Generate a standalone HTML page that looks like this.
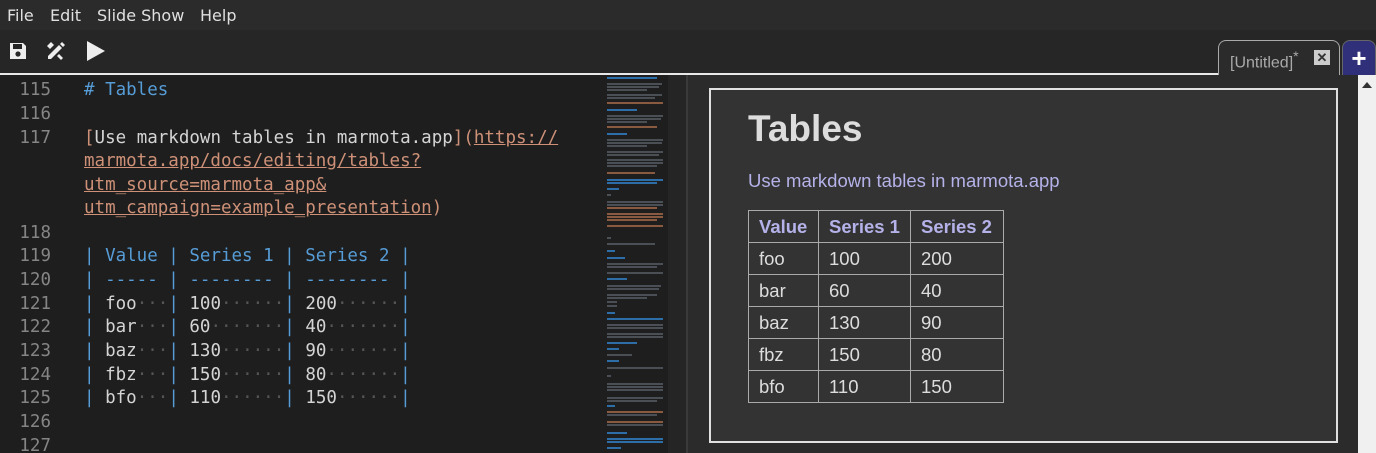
<!DOCTYPE html>
<html><head><style>
*{margin:0;padding:0;box-sizing:border-box}
html{overflow:hidden;width:1376px;height:453px}
body{width:1376px;height:453px;overflow:hidden;background:#2b2b2b;font-family:"DejaVu Sans","Liberation Sans",sans-serif;position:relative}
.menu{position:absolute;left:0;top:0;width:1376px;height:30px;background:#2b2b2b;color:#e0e0e0;font-size:16px}
.menu span{position:absolute;top:6px}
.tool{position:absolute;left:0;top:30px;width:1376px;height:44px;background:#262626}
.sep{position:absolute;left:0;top:73px;width:1218px;height:2px;background:#e8e8e8}
.editor{position:absolute;left:0;top:78px;width:605px;height:375px;overflow:hidden;background:#1e1e1e;font-family:"DejaVu Sans Mono",monospace;font-size:17.5px;color:#d4d4d4}
.edbg{position:absolute;left:0;top:75px;width:605px;height:378px;background:#1e1e1e}
.ln{position:absolute;left:0;width:51px;text-align:right;color:#858585}
.tx{position:absolute;left:84px;white-space:pre}
.b{color:#569cd6}.o{color:#ce9178}.u{color:#ce9178;text-decoration:underline}
.d{color:#555}
.mini{position:absolute;left:605px;top:75px;width:63px;height:378px;overflow:hidden;background:#1e1e1e}
.mini i{position:absolute;left:2px;height:2px;background:#4a4f55}
.mini i.b2{background:#2e6ea8}
.mini i.o2{background:#8a5a40}
.sb{position:absolute;left:668px;top:75px;width:18px;height:378px;background:#252525}
.div{position:absolute;left:686px;top:75px;width:2px;height:378px;background:#3a3a3a}
.prev{position:absolute;left:688px;top:75px;width:670px;height:378px;background:#2b2b2b}
.frame{position:absolute;left:709px;top:88px;width:629px;height:355px;border:2px solid #e0e0e0;background:#333}
.rsb{position:absolute;left:1358px;top:75px;width:18px;height:378px;background:#f0f0f0}
.tab{position:absolute;left:1218px;top:40px;width:122px;height:36px;border:1px solid #aaa;border-bottom:none;border-radius:8px 8px 0 0;background:#2b2b2b;color:#aaa;font-family:"Liberation Sans",sans-serif;font-size:16px}
.plus{position:absolute;left:1342px;top:40px;width:34px;height:36px;background:#2f2f7a;border-radius:8px 8px 0 0;border:1px solid #666;color:#fff;font-size:26px;text-align:center;line-height:34px;font-family:"Liberation Sans",sans-serif;font-weight:bold}
table{position:absolute;left:748px;top:210px;border-collapse:collapse;table-layout:fixed;width:255px;font-family:"Liberation Sans",sans-serif;font-size:18.5px;color:#ddd}
td,th{border:1px solid #aaa;height:32px;padding:0 0 0 10px;text-align:left;white-space:nowrap}
th{color:#b4b2e8}
</style></head><body>
<div class="menu"><span style="left:7px">File</span><span style="left:50px">Edit</span><span style="left:97px">Slide Show</span><span style="left:200px">Help</span></div>
<div class="tool">
<svg style="position:absolute;left:8px;top:11px" width="20" height="20" viewBox="0 0 20 20"><path d="M2 2h13l3 3v13H2z" fill="#eee"/><rect x="5" y="3" width="9" height="5" fill="#262626"/><circle cx="10" cy="13" r="2.6" fill="#262626"/></svg>
<svg style="position:absolute;left:45px;top:10px" width="22" height="22" viewBox="0 0 22 22"><g fill="#eee"><path d="M3 16l11-11 3 3-11 11H3z"/><path d="M15 4l2-2 3 3-2 2z"/><path d="M2 6l4-4 3 3-4 4z"/><path d="M14 14l4 4-2 2-4-4z"/></g></svg>
<svg style="position:absolute;left:86px;top:10px" width="20" height="22" viewBox="0 0 20 22"><path d="M1 1l18 10L1 21z" fill="#eee"/></svg>
</div>
<div class="tab"><span style="position:absolute;left:11px;top:7px">[Untitled]<sup style="font-size:14px">*</sup></span><span style="position:absolute;left:95px;top:9px;width:16px;height:15px;background:#ccc;color:#333;font-size:13px;font-weight:bold;text-align:center;line-height:15px">✕</span></div>
<div class="plus">+</div>
<div class="sep"></div>
<div class="edbg"></div>
<div class="editor">
<div class="ln" style="top:2px">115</div><div class="tx b" style="top:2px"># Tables</div>
<div class="ln" style="top:26px">116</div>
<div class="ln" style="top:50px">117</div><div class="tx" style="top:50px"><span class="o">[</span>Use markdown tables in marmota.app<span class="o">](</span><span class="u">https://</span></div>
<div class="tx" style="top:73px"><span class="u">marmota.app/docs/editing/tables?</span></div>
<div class="tx" style="top:97px"><span class="u">utm_source=marmota_app&amp;</span></div>
<div class="tx" style="top:120px"><span class="u">utm_campaign=example_presentation</span><span class="o">)</span></div>
<div class="ln" style="top:145px">118</div>
<div class="ln" style="top:168px">119</div><div class="tx b" style="top:168px">| Value | Series 1 | Series 2 |</div>
<div class="ln" style="top:192px">120</div><div class="tx b" style="top:192px">| ----- | -------- | -------- |</div>
<div class="ln" style="top:216px">121</div><div class="tx" style="top:216px"><span class="b">|</span> foo<span class="d">···</span><span class="b">|</span> 100<span class="d">······</span><span class="b">|</span> 200<span class="d">······</span><span class="b">|</span></div>
<div class="ln" style="top:239px">122</div><div class="tx" style="top:239px"><span class="b">|</span> bar<span class="d">···</span><span class="b">|</span> 60<span class="d">·······</span><span class="b">|</span> 40<span class="d">·······</span><span class="b">|</span></div>
<div class="ln" style="top:263px">123</div><div class="tx" style="top:263px"><span class="b">|</span> baz<span class="d">···</span><span class="b">|</span> 130<span class="d">······</span><span class="b">|</span> 90<span class="d">·······</span><span class="b">|</span></div>
<div class="ln" style="top:287px">124</div><div class="tx" style="top:287px"><span class="b">|</span> fbz<span class="d">···</span><span class="b">|</span> 150<span class="d">······</span><span class="b">|</span> 80<span class="d">·······</span><span class="b">|</span></div>
<div class="ln" style="top:310px">125</div><div class="tx" style="top:310px"><span class="b">|</span> bfo<span class="d">···</span><span class="b">|</span> 110<span class="d">······</span><span class="b">|</span> 150<span class="d">······</span><span class="b">|</span></div>
<div class="ln" style="top:334px">126</div>
<div class="ln" style="top:358px">127</div>
</div>
<div class="mini">
<i class="b2" style="top:2px;width:50px"></i><i style="top:8px;width:55px"></i><i style="top:11px;width:52px"></i><i style="top:14px;width:40px"></i><i style="top:19px;width:55px"></i><i style="top:22px;width:48px"></i><i class="o2" style="top:27px;width:56px"></i><i class="b2" style="top:34px;width:30px"></i><i style="top:40px;width:56px"></i><i style="top:43px;width:54px"></i><i style="top:46px;width:40px"></i><i class="o2" style="top:51px;width:50px"></i><i class="b2" style="top:58px;width:20px"></i><i style="top:64px;width:56px"></i><i style="top:67px;width:55px"></i><i style="top:70px;width:40px"></i><i style="top:76px;width:56px"></i><i style="top:79px;width:52px"></i><i style="top:84px;width:56px"></i><i style="top:87px;width:56px"></i><i style="top:90px;width:50px"></i><i class="o2" style="top:97px;width:48px"></i><i class="b2" style="top:104px;width:56px"></i><i class="b2" style="top:107px;width:50px"></i><i class="b2" style="top:113px;width:12px"></i><i style="top:119px;width:4px"></i><i style="top:126px;width:56px"></i><i style="top:129px;width:56px"></i><i class="o2" style="top:132px;width:50px"></i><i class="o2" style="top:138px;width:56px"></i><i class="o2" style="top:141px;width:56px"></i><i class="o2" style="top:144px;width:50px"></i><i class="o2" style="top:150px;width:56px"></i><i style="top:162px;width:4px"></i><i style="top:168px;width:48px"></i><i class="b2" style="top:175px;width:8px"></i><i class="b2" style="top:182px;width:18px"></i><i style="top:188px;width:56px"></i><i style="top:191px;width:50px"></i><i style="top:197px;width:56px"></i><i class="b2" style="top:203px;width:20px"></i><i style="top:210px;width:54px"></i><i style="top:213px;width:52px"></i><i style="top:219px;width:50px"></i><i style="top:222px;width:40px"></i><i style="top:226px;width:10px"></i><i style="top:230px;width:10px"></i><i class="b2" style="top:237px;width:8px"></i><i class="b2" style="top:243px;width:56px"></i><i style="top:249px;width:56px"></i><i style="top:252px;width:56px"></i><i style="top:258px;width:56px"></i><i style="top:261px;width:56px"></i><i class="b2" style="top:267px;width:30px"></i><i class="b2" style="top:273px;width:12px"></i><i style="top:279px;width:25px"></i><i class="b2" style="top:285px;width:12px"></i><i style="top:292px;width:56px"></i><i style="top:300px;width:4px"></i><i style="top:308px;width:56px"></i><i style="top:311px;width:56px"></i><i style="top:314px;width:56px"></i><i style="top:322px;width:56px"></i><i style="top:325px;width:50px"></i><i class="b2" style="top:330px;width:8px"></i><i class="o2" style="top:336px;width:56px"></i><i style="top:339px;width:50px"></i><i class="o2" style="top:346px;width:56px"></i><i style="top:349px;width:56px"></i><i class="b2" style="top:357px;width:20px"></i><i class="b2" style="top:363px;width:56px"></i><i class="b2" style="top:366px;width:56px"></i><i class="b2" style="top:372px;width:14px"></i>
</div>
<div class="sb"></div><div class="div"></div>
<div class="prev"></div>
<div class="frame"></div>
<div style="position:absolute;left:748px;top:108px;font-family:'Liberation Sans',sans-serif;font-size:37px;font-weight:bold;color:#ddd">Tables</div>
<div style="position:absolute;left:748px;top:170px;font-family:'Liberation Sans',sans-serif;font-size:18.5px;color:#b4b2e8">Use markdown tables in marmota.app</div>
<table>
<colgroup><col style="width:70px"><col style="width:92px"><col style="width:93px"></colgroup>
<tr><th>Value</th><th>Series 1</th><th>Series 2</th></tr>
<tr><td>foo</td><td>100</td><td>200</td></tr>
<tr><td>bar</td><td>60</td><td>40</td></tr>
<tr><td>baz</td><td>130</td><td>90</td></tr>
<tr><td>fbz</td><td>150</td><td>80</td></tr>
<tr><td>bfo</td><td>110</td><td>150</td></tr>
</table>
<div class="rsb"><svg style="position:absolute;left:4px;top:6px" width="10" height="8"><path d="M0 7L5 1L10 7z" fill="#333"/></svg></div>
</body></html>
